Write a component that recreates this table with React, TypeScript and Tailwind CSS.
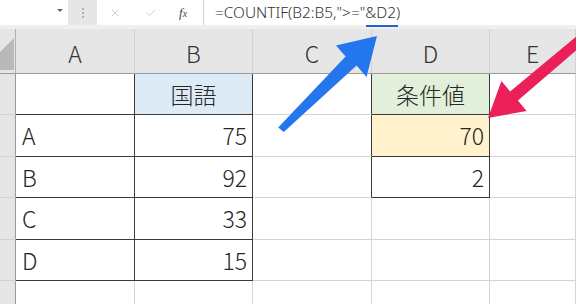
import React from "react";
import { X, Check } from "lucide-react";

const COLS = ["A", "B", "C", "D", "E"];

type Cell = {
  text?: string;
  align?: "left" | "right" | "center";
  bg?: string;
  darkR?: boolean;
  darkB?: boolean;
};

const rows: Cell[][] = [
  [
    { darkR: true, darkB: true },
    { text: "国語", align: "center", bg: "bg-[#ddebf7]", darkR: true, darkB: true },
    { darkR: true },
    { text: "条件値", align: "center", bg: "bg-[#e2efda]", darkR: true, darkB: true },
    {},
  ],
  [
    { text: "A", align: "left", darkR: true, darkB: true },
    { text: "75", align: "right", darkR: true, darkB: true },
    { darkR: true },
    { text: "70", align: "right", bg: "bg-[#fff2cc]", darkR: true, darkB: true },
    {},
  ],
  [
    { text: "B", align: "left", darkR: true, darkB: true },
    { text: "92", align: "right", darkR: true, darkB: true },
    { darkR: true },
    { text: "2", align: "right", darkR: true, darkB: true },
    {},
  ],
  [
    { text: "C", align: "left", darkR: true, darkB: true },
    { text: "33", align: "right", darkR: true, darkB: true },
    {},
    {},
    {},
  ],
  [
    { text: "D", align: "left", darkR: true, darkB: true },
    { text: "15", align: "right", darkR: true, darkB: true },
    {},
    {},
    {},
  ],
  [{}, {}, {}, {}, {}],
  [{}, {}, {}, {}, {}],
];

function FormulaBar() {
  return (
    <div className="flex h-[25px] bg-white">
      {/* name box */}
      <div className="relative w-[68px] bg-white">
        <span className="absolute left-[57px] top-[9px] h-0 w-0 border-x-[3px] border-t-[3px] border-x-transparent border-t-[#666]" />
      </div>
      {/* splitter */}
      <div className="flex w-[29px] flex-col items-center justify-center gap-[2px] bg-[#e6e6e6]">
        <span className="h-[2px] w-[2px] bg-[#b0b0b0]" />
        <span className="h-[2px] w-[2px] bg-[#b0b0b0]" />
        <span className="h-[2px] w-[2px] bg-[#b0b0b0]" />
      </div>
      {/* cancel / enter / fx */}
      <div className="flex w-[106px] items-center bg-white">
        <X className="ml-[12px] h-[12px] w-[12px] text-[#c4c4c4]" strokeWidth={1.6} />
        <Check className="ml-[24px] h-[12px] w-[12px] text-[#c4c4c4]" strokeWidth={1.6} />
        <span className="ml-[22px] font-['Liberation_Serif',serif] text-[13px] italic leading-none text-[#444]">
          f<span className="text-[10px]">x</span>
        </span>
      </div>
      <div className="w-px bg-[#d0d0d0]" />
      {/* formula text */}
      <div className="flex flex-1 items-center bg-white pl-[11px] font-['Noto_Sans',sans-serif] text-[15.4px] font-light leading-none text-[#333]">
        <span>
          =COUNTIF(B2:B5,"&gt;="
          <span className="relative">
            &amp;D2)
            <span className="absolute -bottom-[4px] left-[1px] right-[2px] h-[2px] bg-[#2163d1]" />
          </span>
        </span>
      </div>
    </div>
  );
}

function Sheet() {
  const rowHeights = ["h-[41px]", "h-[42px]", "h-[41px]", "h-[42px]", "h-[41px]", "h-[42px]", "h-[23px]"];
  return (
    <div className="grid grid-cols-[16px_119px_118px_119px_118px_86px] font-['Noto_Sans_CJK_JP',sans-serif] text-[23px] font-light text-[#262626]">
      {/* corner */}
      <div className="relative h-[45px] border-b border-r border-b-[#9a9a9a] border-r-[#b0b0b0] bg-[#e6e6e6]">
        <svg className="absolute left-0 top-0" width="16" height="45" viewBox="0 0 16 45">
          <polygon points="14,9 14,41 0,41 0,23" fill="#b9b9b9" />
        </svg>
      </div>
      {COLS.map((c) => (
        <div
          key={c}
          className="flex h-[45px] items-center justify-center border-b border-r border-b-[#9a9a9a] border-r-[#d2d2d2] bg-[#e6e6e6] pt-[4px] leading-none text-[#333]"
        >
          {c}
        </div>
      ))}
      {rows.map((row, r) => (
        <React.Fragment key={r}>
          <div className={`${rowHeights[r]} border-b border-r border-b-[#d2d2d2] border-r-[#9a9a9a] bg-[#e6e6e6]`} />
          {row.map((cell, ci) => (
            <div
              key={ci}
              className={[
                rowHeights[r],
                "flex items-center border-b border-r leading-none",
                cell.bg ?? "bg-white",
                cell.darkR ? "border-r-[#3a3a3a]" : "border-r-[#d4d4d4]",
                cell.darkB ? "border-b-[#3a3a3a]" : "border-b-[#d4d4d4]",
                cell.align === "right"
                  ? "justify-end pr-[5px]"
                  : cell.align === "center"
                  ? "justify-center"
                  : "justify-start pl-[6px]",
              ].join(" ")}
            >
              {cell.text}
            </div>
          ))}
        </React.Fragment>
      ))}
    </div>
  );
}

export default function App() {
  return (
    <div className="relative h-[304px] w-[576px] overflow-hidden bg-white">
      <FormulaBar />
      <div className="h-[4px] bg-[#efefef]" />
      <Sheet />
      {/* callout arrows */}
      <svg className="pointer-events-none absolute left-0 top-0" width="576" height="304" viewBox="0 0 576 304">
        <polygon
          points="377,36 336,45.5 345.6,56.6 278.2,127.5 283.8,132 356.6,65.6 366.5,77"
          fill="#2476ee"
        />
        <polygon
          points="488,118 526.6,110.9 517.9,100.6 593.6,35.2 587.2,27.6 510.1,91.4 501.4,81.1"
          fill="#eb1f5a"
        />
      </svg>
    </div>
  );
}
